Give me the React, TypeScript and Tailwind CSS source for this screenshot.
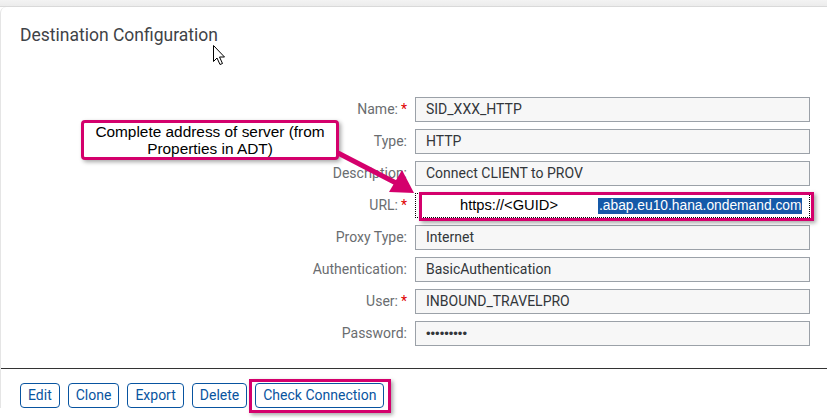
import React from 'react';

type Field = { label: string; value: string; required?: boolean; kind?: 'url' | 'password' };

const fields: Field[] = [
  { label: 'Name:', value: 'SID_XXX_HTTP', required: true },
  { label: 'Type:', value: 'HTTP' },
  { label: 'Description:', value: 'Connect CLIENT to PROV' },
  { label: 'URL:', value: '', required: true, kind: 'url' },
  { label: 'Proxy Type:', value: 'Internet' },
  { label: 'Authentication:', value: 'BasicAuthentication' },
  { label: 'User:', value: 'INBOUND_TRAVELPRO', required: true },
  { label: 'Password:', value: '•••••••••', kind: 'password' },
];

const buttons = ['Edit', 'Clone', 'Export', 'Delete', 'Check Connection'];

function UrlInput() {
  return (
    <div className="relative ml-2 h-[25px] w-[395px]">
      <div className="flex h-full w-full items-center border border-dotted border-black bg-white pl-[44px] text-[14.7px] text-black [font-family:'Liberation_Sans',Arial,sans-serif]">
        <span>https://&lt;GUID&gt;</span>
        <span className="ml-[40px] bg-[#1559a8] px-[1px] text-[13.8px] leading-[16px] text-white">.abap.eu10.hana.ondemand.com</span>
      </div>
      {/* annotation frame */}
      <div className="pointer-events-none absolute -top-[1px] -bottom-[3px] left-[4px] -right-[4px] border-[3px] border-[#d4006c] shadow-[2px_2px_4px_rgba(0,0,0,0.35)]" />
    </div>
  );
}

export default function App() {
  return (
    <div className="relative h-[418px] w-[827px] overflow-hidden bg-white [font-family:Roboto,'Liberation_Sans',sans-serif]">
      <div className="h-[7px] border-b border-[#d9d9d9] bg-gradient-to-b from-[#f3f3f3] to-[#ececec]" />

      <div className="rounded-tl-[6px] border-l border-[#e5e5e5] pt-[16px]">
        <h1 className="pl-[19px] text-[17.5px] leading-[24px] text-[#3f4347]">Destination Configuration</h1>

        <div className="mt-[50px] flex flex-col gap-[7px]">
          {fields.map((f) => (
            <div key={f.label} className="flex h-[25px] items-center">
              <div className="w-[406px] text-right text-[14px] text-[#6a6d70]">
                {f.label}
                {f.required && <span className="ml-[3px] text-[#e00000]">*</span>}
              </div>
              {f.kind === 'url' ? (
                <UrlInput />
              ) : (
                <div
                  className={`ml-2 flex h-[25px] w-[395px] items-center border border-[#9ba1a8] bg-[#f7f7f7] pl-[10px] text-[#32363a] ${
                    f.kind === 'password' ? "text-[13px] [font-family:'Liberation_Sans',Arial,sans-serif]" : 'text-[14px]'
                  }`}
                >
                  {f.value}
                </div>
              )}
            </div>
          ))}
        </div>

        <div className="mt-[22px] h-px bg-[#333]" />

        <div className="flex gap-2 pl-[19px] pt-[14px]">
          {buttons.map((b) => (
            <div key={b} className="relative">
              <div className="flex h-[25px] items-center rounded-[4px] border border-[#0854a0] bg-white px-[7px] text-[14px] text-[#0854a0]">
                {b}
              </div>
              {b === 'Check Connection' && (
                <div className="pointer-events-none absolute -top-[4px] -bottom-[5px] -left-[6px] -right-[7px] border-[3px] border-[#d4006c] shadow-[2px_2px_4px_rgba(0,0,0,0.35)]" />
              )}
            </div>
          ))}
        </div>
      </div>

      {/* callout */}
      <div className="absolute left-[81px] top-[120px] flex h-[40px] w-[258px] flex-col items-center justify-center rounded-[4px] border-[3px] border-[#d4006c] bg-white text-center text-[15.4px] leading-[17px] text-black shadow-[2px_2px_4px_rgba(0,0,0,0.35)] [font-family:'Liberation_Sans',Arial,sans-serif]">
        <span>Complete address of server (from</span>
        <span>Properties in ADT)</span>
      </div>

      {/* arrow */}
      <svg className="absolute left-0 top-0" width="827" height="418">
        <line x1="338" y1="153" x2="398" y2="184" stroke="#d4006c" strokeWidth="5" />
        <polygon points="414,193 389,192 402,170" fill="#d4006c" />
        {/* mouse cursor */}
        <path
          d="M213.5 45.5 L213.5 61.5 L217 58 L220 64.5 L222.5 63.5 L219.5 57 L224.5 57 Z"
          fill="white"
          stroke="#000"
          strokeWidth="1"
          strokeLinejoin="round"
        />
      </svg>
    </div>
  );
}
